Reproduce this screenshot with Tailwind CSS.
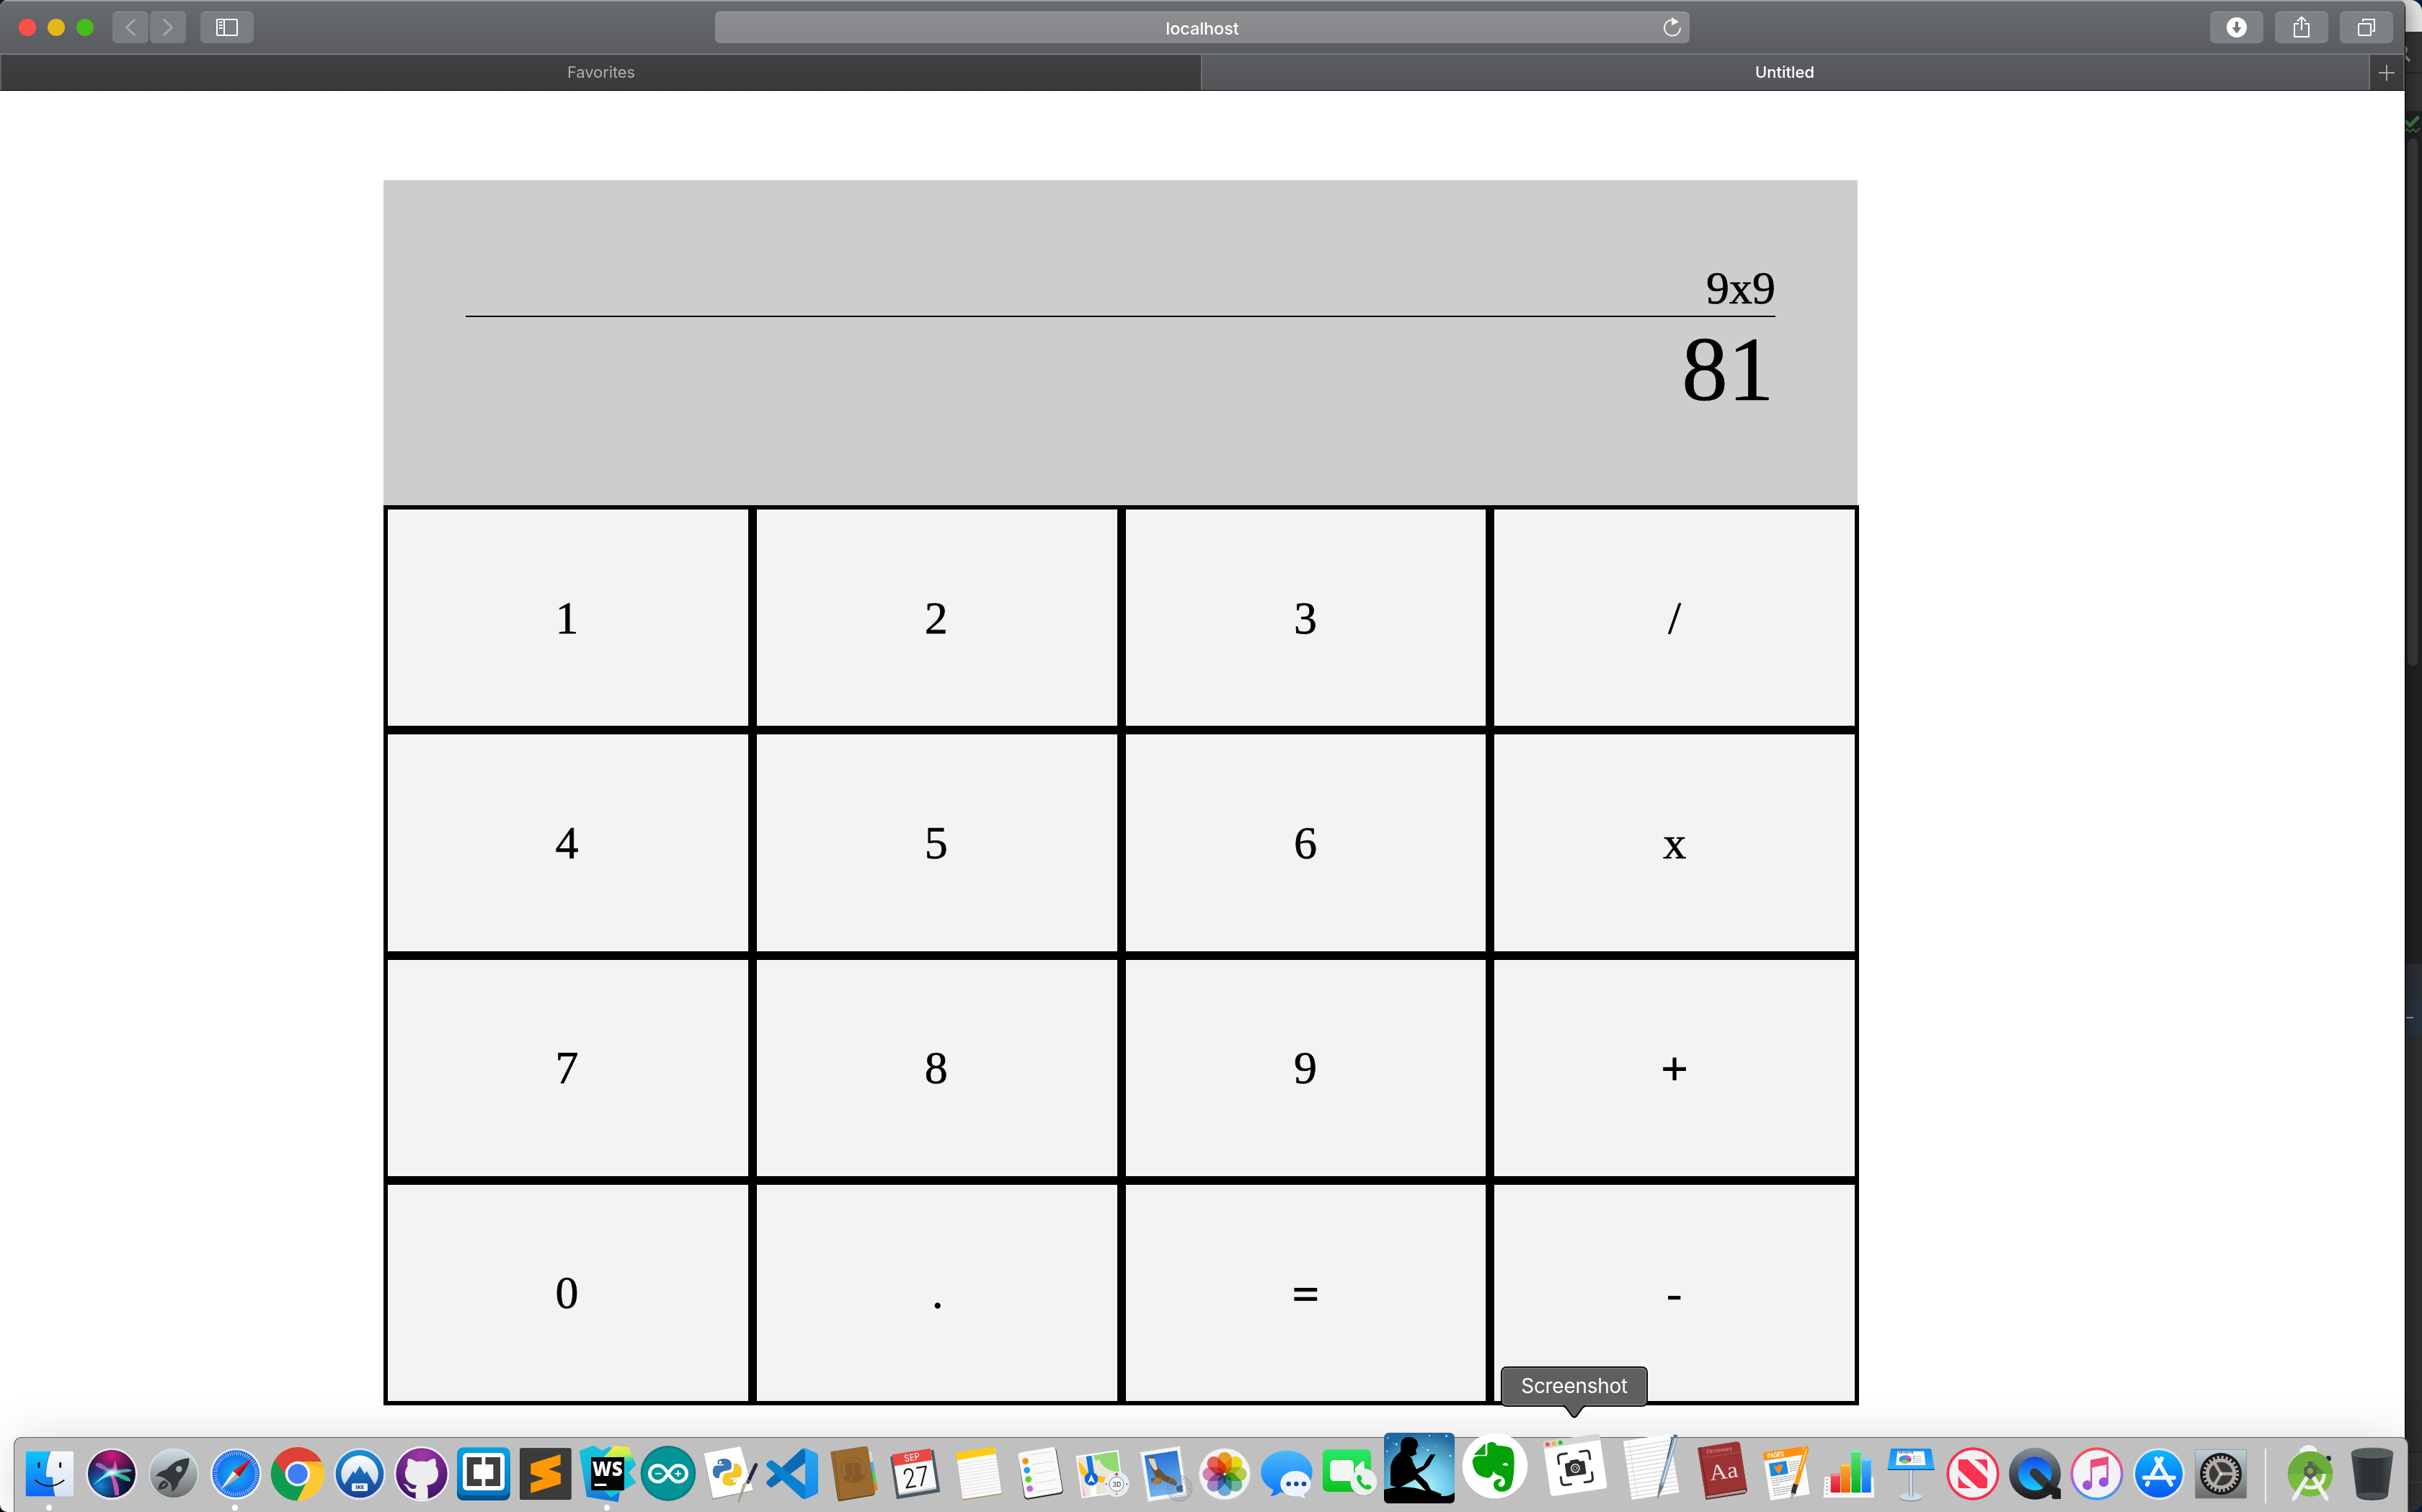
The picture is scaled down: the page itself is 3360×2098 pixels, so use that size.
<!DOCTYPE html>
<html lang="en">
<head>
<meta charset="utf-8">
<title>Untitled</title>
<script src="https://cdn.jsdelivr.net/npm/@tailwindcss/browser@4"></script>
</head>
<body class="relative w-[3360px] h-[2098px] overflow-hidden bg-[#0c1c3f] font-['Inter',sans-serif]">

<!-- editor window behind the browser -->
<div class="absolute left-0 bottom-0 w-[40px] h-[40px] bg-black"></div>
<div class="absolute left-[3200px] top-0 w-[160px] h-[2098px] flex flex-col rounded-[16px] overflow-hidden bg-[#2b2c2e]">
  <div class="h-[44px] bg-[#e6e6e6]"></div>
  <div class="h-[56px] bg-[#333436]"></div>
  <div class="h-[2px] bg-[#242527]"></div>
  <div class="h-[52px] bg-[#333436]"></div>
  <div class="h-[1183px] bg-[#222222] flex justify-end pt-[38px] pr-[6px]"><div class="w-[14px] h-[732px] rounded-full bg-[#3a3a3a]"></div></div>
  <div class="h-[50px] bg-[#2b2f36]"></div>
  <div class="h-[50px] bg-[#2a3340] flex items-center justify-end pr-[12px]"><div class="w-[10px] h-[2px] bg-[#9aa4b0]"></div></div>
  <div class="h-[577px] bg-[#2d2f31]"></div>
  <div class="h-[2px] bg-[#222325]"></div>
  <div class="h-[40px] bg-[#303234]"></div>
  <div class="h-[2px] bg-[#3a3c3e]"></div>
  <div class="flex-1 bg-[#2f3133]"></div>
</div>
<svg class="absolute left-[3336px] top-0 w-[24px] h-[200px]" viewBox="1188 0 72 600" fill="none">
  <circle cx="1178" cy="208" r="18" stroke="#999" stroke-width="7"/><path d="M1188 232L1209 254" stroke="#999" stroke-width="11"/>
  <path d="M1184 498L1210 522L1246 486" stroke="#3a7d42" stroke-width="15"/>
  <path d="M1188 548L1198 537L1210 549L1222 537L1234 549L1250 534" stroke="#3a7d42" stroke-width="5"/>
</svg>

<!-- browser window -->
<div class="absolute left-0 top-0 w-[3337px] h-[2098px] flex flex-col rounded-[10px] overflow-hidden bg-white border-r border-black shadow-[0_0_30px_rgba(0,0,0,0.5)]">
  <div class="h-[76px] shrink-0 flex items-start pt-[14px] pl-[26px] pr-[16px] border-t-2 border-[#999da0] border-b-2 border-b-[#777b7e] bg-linear-to-b from-[#686b6f] to-[#5a5c5f]">
    <div class="flex gap-4 pt-[10px]">
      <div class="size-6 rounded-full bg-[#ff4f47]"></div>
      <div class="size-6 rounded-full bg-[#e2b81b]"></div>
      <div class="size-6 rounded-full bg-[#46bb1d]"></div>
    </div>
    <div class="flex gap-[2px] ml-[26px]">
      <div class="w-[50px] h-[44px] rounded-[7px] bg-[#7b7e81] border-t border-[#95989a]"><svg class="w-[50px] h-[44px] -mt-px" viewBox="0 0 50 44" fill="none" stroke="#a8abad" stroke-width="2.6" stroke-linecap="round" stroke-linejoin="round"><path d="M30.500 11.500L19.500 22L30.500 32.500"/></svg></div>
      <div class="w-[50px] h-[44px] rounded-[7px] bg-[#7b7e81] border-t border-[#95989a]"><svg class="w-[50px] h-[44px] -mt-px" viewBox="0 0 50 44" fill="none" stroke="#a8abad" stroke-width="2.6" stroke-linecap="round" stroke-linejoin="round"><path d="M19.500 11.500L30.500 22L19.500 32.500"/></svg></div>
    </div>
    <div class="ml-5 w-[74px] h-[44px] rounded-[7px] bg-[#7b7e81] border-t border-[#95989a]"><svg class="w-[74px] h-[44px] -mt-px" viewBox="0 0 74 44" fill="none" stroke="#fff" stroke-width="2"><rect x="23" y="11" width="28" height="22" rx="1"/><path d="M33 11V33M26 15H30.500M26 19H30.500M26 23H30.500"/></svg></div>
    <div class="ml-[640px] w-[1352px] h-[44px] rounded-[7px] border-t border-[#a3a4a5] bg-linear-to-b from-[#8d8e90] to-[#858689] flex">
      <div class="flex-1 text-center text-white text-[23.5px] leading-[46px] font-medium tracking-[-0.1px]"><span class="inline-block pl-[50px]">localhost</span></div>
      <svg class="w-[50px] h-[44px] -mt-px" viewBox="2293 16 50 44"><path d="M2326.500 31.500A11 11 0 1 0 2330 39.500" fill="none" stroke="#f1f1f1" stroke-width="2" transform="translate(0 -1)"/><path d="M2318 23.500L2328 30.500L2318 35.500Z" fill="#f1f1f1"/></svg>
    </div>
    <div class="ml-auto flex gap-4">
      <div class="w-[74px] h-[44px] rounded-[7px] bg-[#7f8284] border-t border-[#999c9e]"><svg class="w-[74px] h-[44px] -mt-px" viewBox="0 0 74 44"><circle cx="37" cy="22" r="14" fill="#fff"/><path d="M35 14H39V22H43.500L37 30.500L30.500 22H35Z" fill="#747779"/></svg></div>
      <div class="w-[74px] h-[44px] rounded-[7px] bg-[#7f8284] border-t border-[#999c9e]"><svg class="w-[74px] h-[44px] -mt-px" viewBox="0 0 74 44" fill="none" stroke="#fff" stroke-width="2"><path d="M33 17H27V35H47V17H41M37 26V8M31 13.500L37 7.500L43 13.500" stroke-linejoin="round"/></svg></div>
      <div class="w-[74px] h-[44px] rounded-[7px] bg-[#7f8284] border-t border-[#999c9e]"><svg class="w-[74px] h-[44px] -mt-px" viewBox="0 0 74 44" fill="none" stroke="#fff" stroke-width="2"><rect x="26" y="17" width="17" height="16" rx="1.500"/><path d="M32 14V11H48V27H45"/></svg></div>
    </div>
  </div>
  <div class="h-[50px] shrink-0 flex border-b border-black text-[22px] leading-[49px] text-center tracking-[-0.1px]">
    <div class="w-[1666px] border-l-2 border-[#5f6162] bg-linear-to-b from-[#404143] to-[#39393b] text-[#acadae]">Favorites</div>
    <div class="w-[1622px] border-x-2 border-[#6f7173] bg-linear-to-b from-[#5b5e61] to-[#525356] text-white font-medium tracking-[0px] pr-[2px]">Untitled</div>
    <div class="flex-1 bg-linear-to-b from-[#404143] to-[#39393b] border-r-2 border-[#5f6162]"><svg class="w-[46px] h-[49px]" viewBox="0 0 46 49" stroke="#a9a9aa" stroke-width="2"><path d="M12 25H34M23 14V36"/></svg></div>
  </div>

  <!-- calculator page -->
  <main class="ml-[532px] mt-[124px] w-[2047px] font-['Liberation_Serif',serif] text-black text-[64px] [-webkit-text-stroke:0.7px_black]">
    <section class="w-[2045px] h-[451px] bg-[#cdcdcd] px-[114px] pt-[115px] text-right">
      <div class="h-[75px] leading-[70px] border-b-2 border-black">9x9</div>
      <div class="text-[128px] leading-[145px] pr-[2px]">81</div>
    </section>
    <section class="w-[2047px] h-[1249px] grid grid-cols-4 grid-rows-4 leading-none">
      <div class="border-[6px] border-black bg-[#f3f3f3] flex items-center justify-center pr-[3px] pt-px">1</div>
      <div class="border-[6px] border-black bg-[#f3f3f3] flex items-center justify-center pr-[2px] pt-px">2</div>
      <div class="border-[6px] border-black bg-[#f3f3f3] flex items-center justify-center pr-px pt-px">3</div>
      <div class="border-[6px] border-black bg-[#f3f3f3] flex items-center justify-center pt-px">/</div>
      <div class="border-[6px] border-black bg-[#f3f3f3] flex items-center justify-center pr-[3px] pt-px">4</div>
      <div class="border-[6px] border-black bg-[#f3f3f3] flex items-center justify-center pr-[2px] pt-px">5</div>
      <div class="border-[6px] border-black bg-[#f3f3f3] flex items-center justify-center pr-px pt-px">6</div>
      <div class="border-[6px] border-black bg-[#f3f3f3] flex items-center justify-center pt-px">x</div>
      <div class="border-[6px] border-black bg-[#f3f3f3] flex items-center justify-center pr-[3px] pt-px">7</div>
      <div class="border-[6px] border-black bg-[#f3f3f3] flex items-center justify-center pr-[2px] pt-px">8</div>
      <div class="border-[6px] border-black bg-[#f3f3f3] flex items-center justify-center pr-px pt-px">9</div>
      <div class="border-[6px] border-black bg-[#f3f3f3] flex items-center justify-center pt-[5px] [-webkit-text-stroke:2px_black]">+</div>
      <div class="border-[6px] border-black bg-[#f3f3f3] flex items-center justify-center pr-[3px] pt-px">0</div>
      <div class="border-[6px] border-black bg-[#f3f3f3] flex items-center justify-center pl-[2px] pt-px">.</div>
      <div class="border-[6px] border-black bg-[#f3f3f3] flex items-center justify-center pt-[5px] [-webkit-text-stroke:2px_black]">=</div>
      <div class="border-[6px] border-black bg-[#f3f3f3] flex items-center justify-center pr-px pt-[3px]">-</div>
    </section>
  </main>
</div>

<!-- dock -->
<div class="absolute left-[20px] top-[1995px] w-[3320px] h-[123px] pl-[6px] flex items-start rounded-t-[10px] bg-[#c0c0c0] shadow-[0_0_0_1px_#5f615f,0_0_70px_rgba(0,0,0,0.13)]">

  <!-- Finder -->
  <svg class="w-[86px] h-[103px] shrink-0 overflow-visible" viewBox="78 45 258 309">
    <defs><linearGradient id="fb" x2="0" y2="1"><stop stop-color="#0cc8fd"/><stop offset="1" stop-color="#1263f3"/></linearGradient><linearGradient id="fw" x2="0" y2="1"><stop stop-color="#f8f8fa"/><stop offset="1" stop-color="#d5e2f2"/></linearGradient></defs>
    <rect x="107" y="101" width="199" height="188" rx="6" fill="url(#fw)"/>
    <path d="M113 101H210Q190 150 190 210H218Q218 255 228 289H113Q107 289 107 283V107Q107 101 113 101Z" fill="url(#fb)"/>
    <path d="M210 101Q190 150 190 210H218Q218 255 228 289" fill="none" stroke="#1b4a86" stroke-width="2"/>
    <path d="M162 151V166M251 151V166" stroke="#111" stroke-width="9" stroke-linecap="round"/>
    <path d="M147 222Q205 270 266 222" fill="none" stroke="#111" stroke-width="6" stroke-linecap="round"/>
    <circle cx="204" cy="336" r="12.500" fill="#fff"/>
  </svg>

  <!-- Siri -->
  <svg class="w-[86px] h-[103px] shrink-0 overflow-visible" viewBox="336 45 258 309">
    <defs><radialGradient id="s1" cx=".5" cy=".1" r=".6"><stop stop-color="#d0187c"/><stop offset="1" stop-color="#d0187c" stop-opacity="0"/></radialGradient><radialGradient id="s2" cx=".25" cy=".75" r=".6"><stop stop-color="#128ad6"/><stop offset="1" stop-color="#1040a0" stop-opacity="0"/></radialGradient><radialGradient id="s3"><stop stop-color="#fff"/><stop offset="1" stop-color="#8ff" stop-opacity="0"/></radialGradient></defs>
    <circle cx="465" cy="196" r="108" fill="#e6e6ea"/><circle cx="465" cy="195" r="99" fill="#11102e"/>
    <circle cx="465" cy="195" r="97" fill="url(#s1)"/><circle cx="465" cy="195" r="97" fill="url(#s2)"/>
    <path d="M465 190Q420 140 400 153Q385 165 465 190Z" fill="#b586d8" opacity=".7"/>
    <path d="M465 190Q475 150 480 140Q490 170 487 190Z" fill="#f06fb8" opacity=".8"/>
    <path d="M465 192Q530 192 549 182Q545 170 500 178Z" fill="#58c8d8" opacity=".8"/>
    <path d="M468 190Q545 200 543 226Q530 232 468 196Z" fill="#28b88a"/>
    <path d="M460 200Q475 250 478 284H495Q500 240 468 195Z" fill="#e055ae" opacity=".9"/>
    <path d="M386 243Q440 190 465 178L470 198Q430 210 386 243Z" fill="#5ef0ff"/>
    <ellipse cx="468" cy="190" rx="42" ry="24" fill="url(#s3)"/>
  </svg>

  <!-- Launchpad -->
  <svg class="w-[86px] h-[103px] shrink-0 overflow-visible" viewBox="594 45 258 309">
    <defs><linearGradient id="lp" x2="0" y2="1"><stop stop-color="#cbdde3"/><stop offset="1" stop-color="#6b6b6b"/></linearGradient></defs>
    <circle cx="723" cy="196" r="108" fill="#b5bcbf"/><circle cx="723" cy="193" r="105" fill="#d5dde0"/><circle cx="723" cy="196" r="99" fill="url(#lp)"/>
    <path d="M787 130Q790 175 745 226Q742 252 715 271Q716 250 710 235L685 214Q668 202 647 206Q660 186 692 178Q730 133 787 130Z" fill="#34383a"/>
    <path d="M684 221L701 235Q700 260 658 261Q660 230 684 221Z" fill="#34383a"/><path d="M690 232Q688 248 672 250Q676 240 690 232Z" fill="#8e9293"/>
    <circle cx="745" cy="175" r="13" fill="#a8b2b6"/>
  </svg>

  <!-- Safari -->
  <svg class="w-[86px] h-[103px] shrink-0 overflow-visible" viewBox="852 45 258 309">
    <defs><radialGradient id="sf"><stop stop-color="#16b8ee"/><stop offset="1" stop-color="#1660ee"/></radialGradient></defs>
    <circle cx="982" cy="196" r="107" fill="#ececee"/><circle cx="982" cy="195" r="98" fill="url(#sf)"/>
    <circle cx="982" cy="195" r="86" fill="none" stroke="#d6ecfb" stroke-width="16" stroke-dasharray="2.500 6.506"/>
    <path d="M1049 130L996 208L970 184Z" fill="#e51d1d"/><path d="M1049 130L996 208L983 196Z" fill="#b00f14"/>
    <path d="M917 262L970 184L996 208Z" fill="#f2f2f4"/><path d="M917 262L983 196L996 208Z" fill="#a9adb2"/>
    <circle cx="978" cy="336" r="12.500" fill="#fff"/>
  </svg>

  <!-- Chrome -->
  <svg class="w-[86px] h-[103px] shrink-0 overflow-visible" viewBox="1110 45 258 309">
    <circle cx="1239" cy="195" r="112" fill="#ffc934"/>
    <path d="M1144 136A112 112 0 0 1 1338 144H1239L1190 210Z" fill="#dc4237"/>
    <path d="M1144 136A112 112 0 0 0 1237 307L1278 225L1190 205Z" fill="#0f9c51"/>
    <path d="M1239 144H1338L1350 175Z" fill="#e5a81e" opacity=".5"/>
    <circle cx="1239" cy="195" r="52" fill="#f4f4f4"/><circle cx="1239" cy="195" r="41" fill="#3f7df3"/>
  </svg>

  <!-- NordVPN IKE -->
  <svg class="w-[86px] h-[103px] shrink-0 overflow-visible" viewBox="1368 45 258 309">
    <defs><linearGradient id="nv" x2="0" y2="1"><stop stop-color="#1b93da"/><stop offset="1" stop-color="#1a3f92"/></linearGradient><linearGradient id="nw" x2="0" y2="1"><stop stop-color="#fff"/><stop offset="1" stop-color="#c5d8ee"/></linearGradient></defs>
    <circle cx="1497" cy="196" r="108" fill="#dfe4f4"/><circle cx="1497" cy="195" r="100" fill="url(#nv)"/>
    <path d="M1434 240A77 77 0 1 1 1560 240L1526 184L1518 196L1497 162L1478 194L1470 184Z" fill="url(#nw)"/>
    <rect x="1464" y="235" width="66" height="32" rx="5" fill="#e8eef8"/>
    <text x="1497" y="259" text-anchor="middle" font-size="22" font-weight="800" font-family="Open Sans" fill="#1d4a8f">IKE</text>
  </svg>

  <!-- GitHub -->
  <svg class="w-[86px] h-[103px] shrink-0 overflow-visible" viewBox="96 45 258 309">
    <defs><radialGradient id="gh" cx=".5" cy=".15" r=".8"><stop stop-color="#a13aa8"/><stop offset="1" stop-color="#40156b"/></radialGradient></defs>
    <circle cx="225" cy="195" r="115" fill="#f1f1f3"/><circle cx="225" cy="195" r="107" fill="url(#gh)"/>
    <path d="M169 132Q185 132 203 145Q225 140 247 145Q265 132 281 132Q287 148 283 163Q300 185 291 212Q283 238 246 243Q251 252 251 262V298Q225 308 200 298V272Q175 275 166 257Q160 243 147 238Q165 235 175 252Q185 262 200 256Q200 248 205 243Q168 238 159 212Q150 185 167 163Q163 148 169 132Z" fill="#ededee"/>
  </svg>

  <!-- Brackets -->
  <svg class="w-[86px] h-[103px] shrink-0 overflow-visible" viewBox="354 45 258 309">
    <defs><linearGradient id="br" x2="0" y2="1"><stop stop-color="#06a3e4"/><stop offset="1" stop-color="#0374c4"/></linearGradient></defs>
    <rect x="372" y="105" width="221" height="201" rx="26" fill="#05508f"/><rect x="372" y="85" width="221" height="200" rx="26" fill="url(#br)"/>
    <rect x="396" y="108" width="174" height="156" rx="18" fill="#fff"/>
    <path d="M413 126H475V156H441V217H475V246H413ZM490 126H552V246H490V217H523V156H490Z" fill="#3f3f41"/>
  </svg>

  <!-- Sublime Text -->
  <svg class="w-[86px] h-[103px] shrink-0 overflow-visible" viewBox="612 45 258 309">
    <rect x="633" y="88" width="215" height="215" rx="8" fill="#2c2c2c"/><rect x="635" y="89" width="211" height="211" rx="7" fill="#3b3b3b"/>
    <path d="M679 233L803 193V237L679 275Z" fill="#ff9800"/><path d="M722 213L803 237L770 205Z" fill="#d97f09"/>
    <path d="M679 153L803 114V157L753 176L803 193V237L679 196Z" fill="#ff9800"/>
  </svg>

  <!-- WebStorm -->
  <svg class="w-[86px] h-[103px] shrink-0 overflow-visible" viewBox="870 45 258 309">
    <defs><linearGradient id="w1" x2=".2" y2="1"><stop stop-color="#0cc9da"/><stop offset=".5" stop-color="#1ab0e0"/><stop offset="1" stop-color="#1678d8"/></linearGradient><linearGradient id="w2" x1=".4" x2=".5" y2="1"><stop stop-color="#f8f03c"/><stop offset=".2" stop-color="#c8ec50"/><stop offset=".35" stop-color="#12c8d8"/><stop offset="1" stop-color="#1770d6"/></linearGradient></defs>
    <path d="M881 100L940 77L975 98L1010 80L1060 200L1043 313L912 291Z" fill="url(#w1)"/>
    <path d="M980 128L1028 78L1086 84L1117 158L1085 190L1117 232L1012 293L960 250Z" fill="url(#w2)"/>
    <path d="M1068 165L1117 232L1012 293L980 262Z" fill="#10c6d6"/>
    <rect x="930" y="126" width="138" height="138" fill="#050505"/><rect x="944" y="236" width="50" height="10" fill="#fff"/>
    <text x="935" y="204" font-family="Open Sans" font-weight="800" font-size="82" textLength="126" lengthAdjust="spacingAndGlyphs" fill="#f7f7f7">WS</text>
    <circle cx="996" cy="336" r="12.500" fill="#fff"/>
  </svg>

  <!-- Arduino -->
  <svg class="w-[86px] h-[103px] shrink-0 overflow-visible" viewBox="1128 45 258 309">
    <circle cx="1251" cy="193" r="115" fill="#0a7b80"/><circle cx="1251" cy="193" r="107" fill="#03949a"/>
    <path d="M1251 194C1235 170 1225 160 1208 160A34 34 0 0 0 1208 228C1225 228 1235 218 1251 194C1267 170 1277 160 1294 160A34 34 0 0 1 1294 228C1277 228 1267 218 1251 194Z" fill="none" stroke="#fff" stroke-width="14"/>
    <path d="M1197 194H1223M1279 194H1305M1292 181V207" stroke="#fff" stroke-width="6"/>
  </svg>

  <!-- Python IDLE -->
  <svg class="w-[86px] h-[103px] shrink-0 overflow-visible" viewBox="-144 45 258 309">
    <path d="M-132 112L22 82L76 265L-94 302Z" fill="#8a8378"/><path d="M-131 110L22 81L75 263L-93 298Z" fill="#fff"/>
    <path d="M-73 140Q-60 129 -35 133Q-20 137 -16 152V170Q-20 180 -32 181L-53 186Q-66 190 -67 212Q-83 217 -91 200Q-98 178 -86 163Q-78 160 -48 160L-49 155H-73Z" fill="#3a76b4"/>
    <path d="M-7 153Q15 150 24 168Q32 190 22 207Q10 212 -20 212L-19 218H4Q10 235 -6 243Q-30 248 -44 240Q-54 232 -53 215Q-50 196 -36 191L-12 187Q-3 180 -7 153Z" fill="#f5c52c"/>
    <circle cx="-62" cy="147" r="6" fill="#fff"/><circle cx="-2" cy="226" r="6" fill="#fff"/>
    <path d="M86 158L53 229" stroke="#23283c" stroke-width="15" stroke-linecap="round"/><path d="M50 226L12 315L34 238Z" fill="#c9c3a9" stroke="#8b8672" stroke-width="3"/><path d="M66 160L45 210M46 214L60 228" stroke="#cbd3df" stroke-width="3"/>
  </svg>

  <!-- VS Code -->
  <svg class="w-[86px] h-[103px] shrink-0 overflow-visible" viewBox="114 45 258 309">
    <defs><linearGradient id="vc" x2="0" y2="1"><stop stop-color="#2aa9f3"/><stop offset="1" stop-color="#1588e8"/></linearGradient></defs>
    <path d="M291 88V150L158 248Q150 254 142 248L132 238Q126 231 133 225L275 93Q283 87 291 88Z" fill="#0b6cb5"/>
    <path d="M133 165Q126 158 132 151L142 142Q150 136 158 142L291 243V301Q283 301 275 295Z" fill="#0a80cf"/>
    <path d="M291 88L338 109Q345 113 345 120V269Q345 277 338 280L291 301Q286 301 277 297Q289 298 291 288V102Q290 92 277 92Q284 87 291 88Z" fill="url(#vc)"/>
  </svg>

  <!-- Contacts -->
  <svg class="w-[86px] h-[103px] shrink-0 overflow-visible" viewBox="372 45 258 309">
    <path d="M550 103L566 102L574 145H556Z" fill="#d8d8d8"/><path d="M556 148L575 145L580 186L560 188Z" fill="#4aaede"/><path d="M560 188L580 186L587 226L566 229Z" fill="#3fd060"/><path d="M566 229L587 226L594 263L570 268Z" fill="#d98a1c"/>
    <path d="M397 105L540 81Q550 81 552 91L581 272Q582 282 572 286L432 310Q426 308 426 300Z" fill="#5d3f1a"/>
    <path d="M397 103L540 80Q550 80 552 90L580 268Q581 278 571 281L430 304Z" fill="#9a6a30"/>
    <path d="M410 103L437 300" stroke="#7b511f" stroke-width="3"/>
    <circle cx="493" cy="180" r="53" fill="none" stroke="#83592a" stroke-width="3"/>
    <path d="M447 212Q452 202 467 199Q452 180 459 160Q470 143 485 153Q500 143 515 150Q530 165 520 192L540 201Q525 228 498 232L484 230Q460 227 447 212Z" fill="#865b29"/><path d="M490 153Q484 175 496 195Q478 205 484 230" fill="none" stroke="#a57439" stroke-width="3"/>
  </svg>

  <!-- Calendar -->
  <svg class="w-[86px] h-[103px] shrink-0 overflow-visible" viewBox="630 45 258 309">
    <path d="M645 124L826 95L853 271L672 301Z" fill="#4d5a63"/>
    <path d="M655 115L812 90L838 258L682 284Z" fill="#c9c9c9"/><path d="M655 115L812 89L837 250L681 276Z" fill="#f8f8f8"/>
    <path d="M653 115L812 89L819 138L661 163Z" fill="#e8483f"/>
    <g transform="rotate(-9 746 180)" fill="#fff" text-anchor="middle" font-family="Inter"><text x="744" y="139" font-size="39" textLength="66" lengthAdjust="spacingAndGlyphs">SEP</text><text x="747" y="250" font-size="112" font-weight="300" fill="#161616" textLength="112" lengthAdjust="spacingAndGlyphs">27</text></g>
  </svg>

  <!-- Notes -->
  <svg class="w-[86px] h-[103px] shrink-0 overflow-visible" viewBox="888 45 258 309">
    <path d="M918 110L1081 84L1110 280L946 305Z" fill="#a68b3e"/><path d="M919 110L1081 84L1109 276L946 301Z" fill="#fbfbfb"/>
    <path d="M917 107L1079 82L1084 112L922 139Z" fill="#fbcb18"/>
    <path d="M926 156L1088 131M928 169L1090 144M930 182L1092 157M932 195L1094 170M933 208L1096 183M935 221L1098 196M937 234L1100 209M939 247L1101 222M941 260L1103 235M943 273L1105 248M945 286L1107 261" stroke="#c3c3c3" stroke-width="1.500"/>
  </svg>

  <!-- Reminders -->
  <svg class="w-[86px] h-[103px] shrink-0 overflow-visible" viewBox="1146 45 258 309">
    <path d="M1190 108L1322 86Q1334 85 1336 95L1364 262Q1365 276 1354 279L1217 302Q1206 302 1203 292L1178 124Q1178 111 1190 108Z" fill="#252525"/>
    <path d="M1190 106L1320 84Q1331 83 1333 93L1361 258Q1362 270 1351 273L1217 296Q1207 296 1205 286L1177 120Q1177 109 1190 106Z" fill="#f9f9fa"/>
    <path d="M1229 117L1318 102M1235 157L1324 143M1241 195L1331 181M1248 234L1337 219M1254 270L1343 256" stroke="#c7c7c7" stroke-width="2"/>
    <g stroke="#e2e2e2" stroke-width="3"><circle cx="1208" cy="142" r="14" fill="#ff8d0a"/><circle cx="1214" cy="180" r="14" fill="#13a2f8"/><circle cx="1220" cy="218" r="14" fill="#52d726"/><circle cx="1226" cy="257" r="14" fill="#c663dd"/></g>
  </svg>

  <!-- Maps -->
  <svg class="w-[86px] h-[103px] shrink-0 overflow-visible" viewBox="-126 75 258 309">
    <defs><clipPath id="mp"><path d="M-104 158L58 133L78 296L-82 320Z"/></clipPath></defs>
    <path d="M-112 151L64 125L86 302L-88 327Z" fill="#fbfbfb"/>
    <g clip-path="url(#mp)"><path d="M-120 120H100V340H-120Z" fill="#e9e4dc"/><path d="M-50 120H100V270L-20 200Z" fill="#8fdb72"/><path d="M-30 170Q-15 220 60 235" stroke="#eae6de" stroke-width="32" fill="none"/><path d="M-5 130Q5 190 80 190V120H0Z" fill="#92d873"/>
    <path d="M-104 220L-70 325H-110Z" fill="#f3a9c0"/><path d="M-110 180L-60 240L90 262" stroke="#fdbf23" stroke-width="25" fill="none"/><path d="M-60 140L-45 240" stroke="#1573de" stroke-width="23"/><path d="M-42 240L-38 330" stroke="#fff" stroke-width="25"/></g>
    <circle cx="-48" cy="246" r="28" fill="#0c65d6"/><path d="M-48 227L-33 263L-48 254L-63 263Z" fill="#fff"/>
    <circle cx="57" cy="268" r="53" fill="#e9ebef"/><circle cx="57" cy="268" r="30" fill="#f5f5f5" stroke="#5a8fb4" stroke-width="3"/>
    <text x="58" y="278" text-anchor="middle" font-family="Inter" font-size="27" textLength="35" lengthAdjust="spacingAndGlyphs" fill="#222">3D</text><path d="M57 219L64 231H50Z" fill="#e02020" stroke="#e02020"/><path d="M11 268H18M96 268H103M57 307V312" stroke="#333" stroke-width="4"/>
  </svg>

  <!-- Mail -->
  <svg class="w-[86px] h-[103px] shrink-0 overflow-visible" viewBox="132 75 258 309">
    <defs><linearGradient id="ml" x2=".15" y2="1"><stop stop-color="#1e67d2"/><stop offset="1" stop-color="#72b5ee"/></linearGradient></defs>
    <path d="M159 137L318 113L347 313L190 338Z" fill="#f7f7f7" stroke="#f7f7f7" stroke-width="7" stroke-dasharray="6 4"/>
    <path d="M173 149L309 128L335 302L198 322Z" fill="url(#ml)"/>
    <path d="M188 155L208 152L232 200L262 232Q300 245 309 262L305 275Q270 265 245 250L238 270L203 262L200 246L222 240Q198 200 188 155Z" fill="#6d5238"/><path d="M190 160L215 163L228 205L218 212Q195 190 190 160Z" fill="#d8d2c8"/><path d="M222 240L244 243L238 270L203 262Z" fill="#a77b48"/>
    <g fill="none" stroke="#7b8594" opacity=".6"><circle cx="319" cy="286" r="52" stroke-width="4"/><circle cx="319" cy="286" r="30" stroke-width="3"/><circle cx="319" cy="286" r="41" stroke-width="11" stroke-dasharray="4 5"/></g>
    <path d="M318 276Q330 270 333 279Q326 287 334 293Q326 304 318 298Q310 302 306 288Q306 273 318 276ZM318 274L324 266" fill="#44617f" stroke="#44617f" stroke-width="2"/>
  </svg>

  <!-- Photos -->
  <svg class="w-[86px] h-[103px] shrink-0 overflow-visible" viewBox="390 75 258 309">
    <circle cx="507" cy="227" r="107" fill="#dadada"/><circle cx="507" cy="225" r="106" fill="#f3f3f4"/>
    <g class="mix-blend-multiply">
      <rect x="478" y="134" width="58" height="90" rx="29" fill="#f9a12b" class="mix-blend-multiply"/>
      <rect x="478" y="134" width="58" height="90" rx="29" fill="#f6e01f" transform="rotate(45 507 226)" class="mix-blend-multiply"/>
      <rect x="478" y="134" width="58" height="90" rx="29" fill="#b9d94a" transform="rotate(90 507 226)" class="mix-blend-multiply"/>
      <rect x="478" y="134" width="58" height="90" rx="29" fill="#6fc09a" transform="rotate(135 507 226)" class="mix-blend-multiply"/>
      <rect x="478" y="134" width="58" height="90" rx="29" fill="#6bb0e2" transform="rotate(180 507 226)" class="mix-blend-multiply"/>
      <rect x="478" y="134" width="58" height="90" rx="29" fill="#a58ccb" transform="rotate(225 507 226)" class="mix-blend-multiply"/>
      <rect x="478" y="134" width="58" height="90" rx="29" fill="#dc88b8" transform="rotate(270 507 226)" class="mix-blend-multiply"/>
      <rect x="478" y="134" width="58" height="90" rx="29" fill="#f2665a" transform="rotate(315 507 226)" class="mix-blend-multiply"/>
    </g><circle cx="507" cy="226" r="5" fill="#fff"/>
  </svg>

  <!-- Messages -->
  <svg class="w-[86px] h-[103px] shrink-0 overflow-visible" viewBox="648 75 258 309">
    <defs><linearGradient id="ms" x2="0" y2="1"><stop stop-color="#4cbaf9"/><stop offset="1" stop-color="#0a78fb"/></linearGradient></defs>
    <path d="M765 128C825 128 872 166 872 216C872 268 825 304 765 304Q750 304 738 301Q722 318 696 318Q710 305 709 291Q658 266 658 216C658 166 705 128 765 128Z" fill="url(#ms)"/>
    <path d="M802 213C838 213 865 236 865 267Q865 293 836 309Q836 320 844 327Q828 325 817 317Q812 319 802 319C766 319 739 297 739 267C739 236 766 213 802 213Z" fill="#edf4fc"/>
    <circle cx="773" cy="267" r="10" fill="#134a9d"/><circle cx="805" cy="267" r="10" fill="#134a9d"/><circle cx="837" cy="267" r="10" fill="#134a9d"/>
  </svg>

  <!-- FaceTime -->
  <svg class="w-[86px] h-[103px] shrink-0 overflow-visible" viewBox="906 75 258 309">
    <defs><linearGradient id="ft" x2="0" y2="1"><stop stop-color="#27ea6a"/><stop offset="1" stop-color="#0bc41d"/></linearGradient></defs>
    <rect x="915" y="123" width="201" height="177" rx="22" fill="url(#ft)"/>
    <rect x="946" y="168" width="98" height="87" rx="16" fill="#f4f6f4"/><path d="M1050 200L1078 174Q1088 168 1088 182V240Q1088 252 1078 246L1050 222Z" fill="#f4f6f4"/>
    <circle cx="1086" cy="261" r="57" fill="#000" opacity=".18"/><circle cx="1086" cy="259" r="56" fill="#ecefeb"/>
    <path d="M1063 230Q1070 227 1075 236L1079 244Q1080 249 1073 253Q1080 268 1094 275Q1099 267 1104 269L1116 275Q1121 280 1113 287Q1103 295 1086 285Q1062 268 1057 246Q1055 235 1063 230Z" fill="#12c433"/>
  </svg>

  <!-- Kindle -->
  <svg class="w-[104px] h-[103px] shrink-0 overflow-visible" viewBox="1164 75 312 309">
    <defs><radialGradient id="kd" cx=".55" cy=".8" r=".8"><stop stop-color="#bdf6ff"/><stop offset=".5" stop-color="#6cc6e4"/><stop offset="1" stop-color="#20689f"/></radialGradient></defs>
    <rect x="1170" y="54" width="294" height="294" rx="20" fill="url(#kd)"/>
    <path d="M1170 292Q1260 265 1350 298Q1420 335 1464 303V328Q1464 348 1444 348H1190Q1170 348 1170 328Z"/>
    <path d="M1240 100Q1245 70 1278 72Q1310 75 1313 108L1302 125L1306 143L1283 153L1272 148Q1290 160 1290 176L1305 206L1335 191L1345 172L1364 144H1384L1358 190L1338 208L1310 224L1350 262L1365 292L1410 310L1405 318H1350L1345 296L1300 248L1230 285L1197 272V200Q1200 160 1240 132Z"/>
    <g fill="#e8fbff"><circle cx="1222" cy="102" r="4"/><circle cx="1187" cy="76" r="3"/><circle cx="1359" cy="66" r="3"/><circle cx="1430" cy="68" r="4"/><circle cx="1352" cy="126" r="4"/><circle cx="1446" cy="150" r="4"/><circle cx="1182" cy="132" r="3"/><circle cx="1331" cy="115" r="2"/><circle cx="1385" cy="112" r="2"/><circle cx="1210" cy="97" r="2"/></g>
  </svg>

  <!-- Evernote -->
  <svg class="w-[106px] h-[103px] shrink-0 overflow-visible" viewBox="-54 345 318 309">
    <circle cx="102" cy="464" r="137" fill="#aaa" opacity=".5"/><circle cx="102" cy="462" r="136" fill="#fff"/>
    <path d="M70 370Q86 356 104 368L110 377Q145 378 166 386Q182 395 182 440Q182 530 164 555Q150 572 122 569Q94 562 96 536Q100 515 128 516Q128 530 118 532Q112 545 128 550Q148 545 142 520Q138 505 112 500Q100 495 96 484Q88 515 70 512Q30 508 18 480Q8 460 8 440Q12 424 30 421H66L70 415Z" fill="#05a10b"/>
    <path d="M18 414L60 372V414Z" fill="#05a10b" stroke="#05a10b" stroke-width="4" stroke-linejoin="round"/><path d="M132 458Q138 446 154 452L156 462Q145 460 132 458Z" fill="#fff"/>
  </svg>

  <!-- Screenshot -->
  <svg class="w-[110px] h-[103px] shrink-0 overflow-visible" viewBox="264 345 330 309">
    <path d="M310 360L526 330Q536 330 538 338L568 544Q568 553 560 556L345 588Q336 588 333 580L303 370Q303 362 310 360Z" fill="#fff"/>
    <path d="M310 359L526 329Q536 329 538 337L540 354L307 391L303 369Q303 361 310 359Z" fill="#d4d4d6"/>
    <circle cx="321" cy="373" r="9" fill="#fb5050"/><circle cx="347" cy="369" r="9" fill="#fbb020"/><circle cx="374" cy="365" r="9" fill="#20c038"/>
    <g transform="rotate(-8 437 470)" fill="none" stroke="#2f2f31" stroke-width="9" stroke-linecap="round"><path d="M371 444V420Q371 406 385 406H409M464 406H489Q502 406 502 420V442M502 498V520Q502 535 489 535H466M409 535H385Q371 535 371 520V500"/><path d="M400 448H414L422 438H450L458 448H473Q476 448 476 452V496Q476 500 473 500H400Q397 500 397 496V452Q397 448 400 448Z" fill="#2f2f31" stroke-width="4"/><circle cx="436" cy="472" r="17" stroke="#fff" stroke-width="4"/><circle cx="436" cy="472" r="8" fill="none" stroke="#fff" stroke-width="2"/></g>
  </svg>

  <!-- TextEdit -->
  <svg class="w-[102px] h-[103px] shrink-0 overflow-visible" viewBox="594 345 306 309">
    <path d="M636 359L828 329L869 572L671 603Z" fill="#fcfcfc"/>
    <path d="M640 387L832 356M643 404L835 373M645 421L838 390M648 438L841 407M650 455L843 424M653 472L846 441M655 489L849 458M658 506L852 475M660 523L854 492M663 540L857 509M665 557L860 526M668 574L863 543M670 590L866 559" stroke="#b4b4b8" stroke-width="2"/>
    <path d="M658 357L696 598" stroke="#f5b6b6" stroke-width="2"/>
    <path d="M854 340L794 545" stroke="#8aa2b8" stroke-width="20"/><path d="M856 342L800 530" stroke="#cfe3f2" stroke-width="6"/><path d="M786 540L804 546L776 603Z" fill="#6c7680"/><path d="M855 332L851 346" stroke="#58718a" stroke-width="16"/><path d="M840 345L819 430" stroke="#2f4052" stroke-width="4"/>
  </svg>

  <!-- Dictionary -->
  <svg class="w-[94px] h-[103px] shrink-0 overflow-visible" viewBox="900 345 282 309">
    <path d="M946 388L1118 365L1151 560Q1152 574 1140 578L980 603Z" fill="#4f1618"/><path d="M980 588L1146 560V572L984 598Z" fill="#a99a86"/>
    <path d="M945 387L1107 361Q1119 361 1122 372L1150 556L978 586Z" fill="#9b3334"/><path d="M955 386L988 583" stroke="#6b1e20" stroke-width="4"/><path d="M963 429L1126 404" stroke="#c06a68" stroke-width="2"/>
    <g transform="rotate(-8 1045 460)" fill="#f0dede" text-anchor="middle" font-family="Liberation Serif"><text x="1045" y="403" font-size="25" textLength="108" fill="#e0a9a6">Dictionary</text><text x="1050" y="516" font-size="92" textLength="118" lengthAdjust="spacingAndGlyphs">Aa</text></g>
  </svg>

  <!-- Pages -->
  <svg class="w-[88px] h-[103px] shrink-0 overflow-visible" viewBox="1182 345 264 309">
    <path d="M1217 406L1383 381L1412 580L1248 606Z" fill="#fbfbfb"/><path d="M1217 406L1383 381L1388 415L1222 441Z" fill="#fd9112"/>
    <text x="1237" y="430" transform="rotate(-8 1237 430)" font-family="Liberation Sans" font-size="27" fill="#fff" stroke="#fff" textLength="70" lengthAdjust="spacingAndGlyphs">PAGES</text>
    <path d="M1242 452L1314 441L1323 494L1250 506Z" fill="#1788e8"/><path d="M1260 459L1275 465L1284 455L1302 458L1293 480L1284 496L1272 484Z" fill="#fa8a1c"/>
    <path d="M1323 448L1366 442M1325 457L1366 451M1327 466L1366 460M1329 475L1366 469M1330 484L1362 479M1252 516L1352 500M1254 525L1350 509M1255 534L1347 518M1257 543L1290 538M1259 558L1340 545M1260 567L1340 554M1262 576L1338 563M1264 585L1320 576" stroke="#777" stroke-width="2.500" stroke-dasharray="9 2 5 2"/>
    <path d="M1399 390L1355 542" stroke="#f79a1c" stroke-width="20" stroke-linecap="round"/><path d="M1399 392L1372 480" stroke="#ffd28a" stroke-width="5"/><path d="M1353 538L1343 578" stroke="#333" stroke-width="20"/><path d="M1334 574L1351 578L1333 607Z" fill="#9fb4c4"/>
  </svg>

  <!-- Numbers -->
  <svg class="w-[86px] h-[103px] shrink-0 overflow-visible" viewBox="-84 45 258 309">
    <defs><linearGradient id="n1" x2="0" y2="1"><stop stop-color="#f5555f"/><stop offset="1" stop-color="#dc1530"/></linearGradient><linearGradient id="n2" x2="0" y2="1"><stop stop-color="#fdb02c"/><stop offset="1" stop-color="#ee5f0a"/></linearGradient><linearGradient id="n3" x2="0" y2="1"><stop stop-color="#56e878"/><stop offset="1" stop-color="#08ae1c"/></linearGradient><linearGradient id="n4" x2="0" y2="1"><stop stop-color="#47c0fa"/><stop offset="1" stop-color="#0a70f4"/></linearGradient></defs>
    <path d="M-56 208H147L151 294H-61Z" fill="#f7f7f7"/><path d="M-46 216V284" stroke="#888" stroke-width="7" stroke-dasharray="4 11"/>
    <rect x="-31" y="194" width="40" height="79" rx="3" fill="url(#n1)"/><rect x="11" y="154" width="40" height="119" rx="3" fill="url(#n2)"/><rect x="55" y="95" width="39" height="178" rx="3" fill="url(#n3)"/><rect x="98" y="130" width="39" height="143" rx="3" fill="url(#n4)"/>
    <path d="M-29 200H7M13 160H49M57 101H92M100 136H135" stroke="#fff" stroke-opacity=".35" stroke-width="9"/>
  </svg>

  <!-- Keynote -->
  <svg class="w-[86px] h-[103px] shrink-0 overflow-visible" viewBox="174 45 258 309">
    <defs><linearGradient id="kn" x2="0" y2="1"><stop stop-color="#0d8df8"/><stop offset="1" stop-color="#36b0fa"/></linearGradient><linearGradient id="kp"><stop stop-color="#7b8894"/><stop offset=".5" stop-color="#eef3f8"/><stop offset="1" stop-color="#7b8894"/></linearGradient></defs>
    <ellipse cx="303" cy="293" rx="47" ry="17" fill="#6f8294"/><ellipse cx="303" cy="290" rx="47" ry="16" fill="#cbdbe8"/><rect x="294" y="178" width="18" height="112" fill="url(#kp)"/>
    <path d="M206 172H401V180H206Z" fill="#1267ad"/><path d="M224 90H383Q387 90 388 94L401 174H206L219 94Q220 90 224 90Z" fill="url(#kn)"/>
    <path d="M247 101H358L364 159H240Z" fill="#fdfdfd"/><text x="252" y="112" font-family="Liberation Sans" font-weight="700" font-size="12" textLength="62" lengthAdjust="spacingAndGlyphs" fill="#445">KEYNOTE</text>
    <ellipse cx="279" cy="135" rx="26" ry="17" fill="#2a96e8"/><path d="M279 135L281 118Q303 120 305 133Z" fill="#c060d8"/><path d="M279 135L305 133Q304 140 298 146Z" fill="#e83058"/><path d="M279 135L300 145Q280 158 256 143Z" fill="#7fd844"/><path d="M313 122H345M313 131H346M313 139H347M313 147H348" stroke="#bbb" stroke-width="3"/><path d="M312 122H317" stroke="#29f" stroke-width="4"/><path d="M312 131H317" stroke="#e35" stroke-width="4"/><path d="M312 146H317" stroke="#7c3" stroke-width="4"/>
  </svg>

  <!-- News -->
  <svg class="w-[86px] h-[103px] shrink-0 overflow-visible" viewBox="432 45 258 309">
    <circle cx="561" cy="195" r="110" fill="#fb2e4e"/><circle cx="561" cy="195" r="99" fill="#f2f2f3"/>
    <path d="M500 142Q500 135 508 135H538L621 214V248Q621 255 614 255H584L500 176Z" fill="#fb3350"/><path d="M566 135H614Q621 135 621 142V190Q612 158 566 135Z" fill="#fb3350"/><path d="M500 201Q510 233 556 255H508Q500 255 500 248Z" fill="#fb3350"/>
  </svg>

  <!-- QuickTime -->
  <svg class="w-[86px] h-[103px] shrink-0 overflow-visible" viewBox="690 45 258 309">
    <defs><linearGradient id="q1" x2="0" y2="1"><stop stop-color="#8893a1"/><stop offset=".5" stop-color="#464c53"/><stop offset="1" stop-color="#18181a"/></linearGradient><linearGradient id="q2" x2="0" y2="1"><stop stop-color="#1546e4"/><stop offset="1" stop-color="#16d0fd"/></linearGradient></defs>
    <circle cx="819" cy="194" r="108" fill="url(#q1)"/><circle cx="819" cy="194" r="70" fill="url(#q2)"/>
    <path d="M818 192L890 262" stroke="#34383c" stroke-width="40" stroke-linecap="round"/><path d="M870 230L908 254Q912 246 927 260V300H895Q885 292 892 285L850 262Z" fill="#1f2022"/>
  </svg>

  <!-- iTunes -->
  <svg class="w-[86px] h-[103px] shrink-0 overflow-visible" viewBox="948 45 258 309">
    <defs><linearGradient id="i1" x1=".5" x2=".6" y2="1"><stop stop-color="#fd4848"/><stop offset=".3" stop-color="#f2508c"/><stop offset=".6" stop-color="#a060f0"/><stop offset="1" stop-color="#28a8fd"/></linearGradient><linearGradient id="i2" x1=".3" x2=".5" y2="1"><stop stop-color="#fb4a50"/><stop offset=".5" stop-color="#d550a8"/><stop offset="1" stop-color="#7a54f6"/></linearGradient></defs>
    <circle cx="1077" cy="195" r="110" fill="url(#i1)"/><circle cx="1077" cy="195" r="99" fill="#f3f2f6"/>
    <path d="M1050 137L1125 123V226A20 20 0 1 1 1117 213V157L1057 169V240A20 20 0 1 1 1050 227Z" fill="url(#i2)"/>
  </svg>

  <!-- App Store -->
  <svg class="w-[86px] h-[103px] shrink-0 overflow-visible" viewBox="1206 45 258 309">
    <defs><linearGradient id="as" x2="0" y2="1"><stop stop-color="#0bb8fd"/><stop offset="1" stop-color="#0c55f2"/></linearGradient></defs>
    <circle cx="1335" cy="196" r="108" fill="#e5e5e8"/><circle cx="1335" cy="195" r="99" fill="url(#as)"/>
    <g stroke="#f4f5f8" stroke-width="17" stroke-linecap="round"><path d="M1273 211H1398M1347 132L1304 208M1290 232L1286 240M1324 132L1386 240"/></g>
    <path d="M1335 165L1308 203H1345L1337 180Z" fill="#0a8cf8"/><path d="M1345 132L1308 200" stroke="#f4f5f8" stroke-width="17" stroke-linecap="round"/>
  </svg>

  <!-- System Preferences -->
  <svg class="w-[86px] h-[103px] shrink-0 overflow-visible" viewBox="114 45 258 309">
    <defs><linearGradient id="sp" x2="0" y2="1"><stop stop-color="#bcd0d8"/><stop offset="1" stop-color="#6a6a6a"/></linearGradient></defs>
    <rect x="136" y="94" width="214" height="203" rx="5" fill="url(#sp)" stroke="#84898b" stroke-width="2"/><circle cx="243" cy="195" r="87" fill="#1a1a1a"/>
    <circle cx="243" cy="195" r="69" fill="none" stroke="#b3aea9" stroke-width="13" stroke-dasharray="9 9.060"/><circle cx="243" cy="195" r="56" fill="#3a3a3a" stroke="#b3aea9" stroke-width="15"/>
    <path d="M243 195H302M243 195L213 145M243 195L213 246" stroke="#b3aea9" stroke-width="13"/><circle cx="243" cy="195" r="9" fill="#ddd" stroke="#777" stroke-width="2"/>
  </svg>

  <div class="w-[38px] h-[103px] shrink-0 flex justify-center pt-[15px]"><div class="w-[2px] h-[76px] bg-[#f2f2f2]"></div></div>

  <!-- Android Studio -->
  <svg class="w-[86px] h-[103px] shrink-0 overflow-visible" viewBox="486 45 258 309">
    <path d="M572 104Q565 96 580 88Q590 75 608 75Q628 75 636 88Q648 94 640 106Z" fill="#f3f3f3"/><circle cx="611" cy="186" r="88" fill="#f3f3f3"/><circle cx="691" cy="131" r="11" fill="#242744"/>
    <circle cx="615" cy="196" r="94" fill="#79bb3e"/><path d="M521 195A94 94 0 0 1 709 195Z" fill="#6cac3c"/><path d="M627 145L677 195H640Z" fill="#4f8c30"/>
    <path d="M673 195Q670 252 615 253Q600 253 592 246" fill="none" stroke="#f0f0f0" stroke-width="15"/><path d="M598 200L610 212L556 302L541 309L539 293ZM632 200L620 212L674 302L690 309L691 293Z" fill="#efefef"/>
    <path d="M605 144H626V160L641 171V199L615 218L589 199V171L605 160Z" fill="#5c5c5c"/><circle cx="615" cy="183" r="13" fill="#72b43d"/>
  </svg>

  <!-- Trash -->
  <svg class="w-[86px] h-[103px] shrink-0 overflow-visible" viewBox="744 45 258 309">
    <defs><linearGradient id="tr"><stop stop-color="#464d50"/><stop offset=".3" stop-color="#2b3033"/><stop offset=".7" stop-color="#2e3336"/><stop offset="1" stop-color="#4b5255"/></linearGradient></defs>
    <path d="M785 108L808 286Q815 305 873 305Q930 305 938 286L961 108Z" fill="url(#tr)"/><path d="M812 282Q820 272 873 272Q926 272 934 282Q930 301 873 301Q818 301 812 282Z" fill="#5b6367" opacity=".6"/>
    <ellipse cx="873" cy="108" rx="87" ry="21" fill="#565b5e" stroke="#71777a" stroke-width="2.500"/>
  </svg>
</div>

<!-- tooltip over the dock -->
<div class="absolute left-[2082px] top-[1896px] w-[204px] h-[72px]">
  <svg class="absolute left-0 top-0 w-[204px] h-[72px]" viewBox="0 0 204 72"><path d="M9 1H195Q203 1 203 9V47Q203 55 195 55H118Q115 55 113 58L105 69Q102 72 99 69L91 58Q89 55 86 55H9Q1 55 1 47V9Q1 1 9 1Z" fill="#5f5f5f" stroke="#000" stroke-width="2"/><path d="M9 2.500H195Q201.500 2.500 201.500 9V47Q201.500 53.500 195 53.500H118M86 53.500H9Q2.500 53.500 2.500 47V9Q2.500 2.500 9 2.500" fill="none" stroke="#858585" stroke-width="1.500"/></svg>
  <div class="relative text-center text-white text-[28px] leading-[54px] tracking-[-0.3px]">Screenshot</div>
</div>
</body>
</html>
